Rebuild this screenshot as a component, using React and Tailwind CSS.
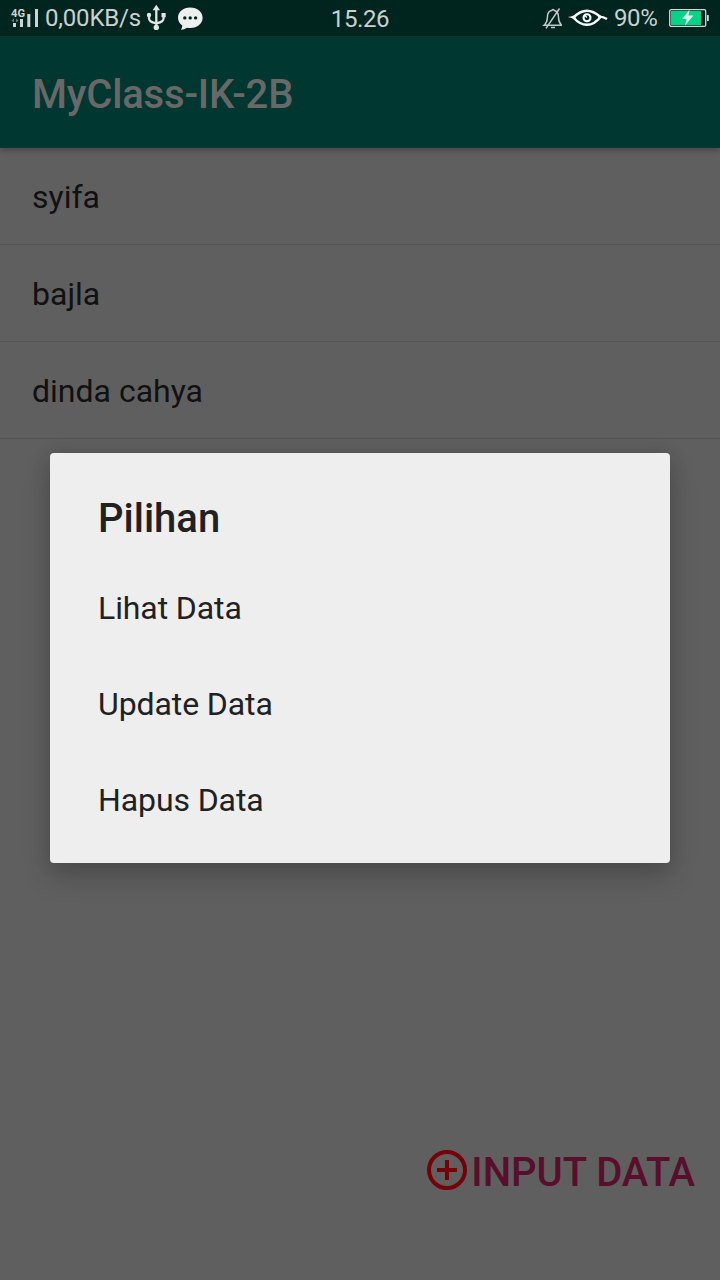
const items = ["syifa", "bajla", "dinda cahya"];
const options = ["Lihat Data", "Update Data", "Hapus Data"];

function SignalIcon() {
  return (
    <svg className="h-9 w-[30px] shrink-0" viewBox="0 0 30 36" fill="#cfd3d2">
      <text x="1" y="16.5" fontSize="10" fontWeight="700" fontFamily="Roboto, sans-serif" textLength="14" lengthAdjust="spacingAndGlyphs">4G</text>
      <rect x="3" y="23" width="3" height="4" />
      <rect x="10" y="19" width="3" height="8" />
      <rect x="17.300" y="14" width="3" height="13" />
      <rect x="25" y="9" width="3" height="18" />
      <path d="M1.500 20.500l2.500-2v4zM8.500 20.500l-2.500-2v4z" opacity=".5" />
    </svg>
  );
}

function UsbIcon() {
  return (
    <svg className="h-9 w-5 shrink-0" viewBox="0 0 20 36" fill="none" stroke="#e3e6e5" strokeWidth="2.3">
      <path d="M10.300 9v18M3 15v3c0 3 1.500 4 7.300 5.300C16.100 22 17.600 21 17.600 18V15" />
      <path d="M10.300 4.700L14 10.200H6.600z" fill="#e3e6e5" stroke="none" />
      <circle cx="3" cy="15" r="2.200" fill="#e3e6e5" stroke="none" />
      <rect x="15.500" y="13" width="4.200" height="4.200" fill="#e3e6e5" stroke="none" />
      <circle cx="10.300" cy="27.400" r="2.700" fill="#e3e6e5" stroke="none" />
    </svg>
  );
}

function ChatIcon() {
  return (
    <svg className="h-9 w-[26px] shrink-0" viewBox="-0.300 0.600 26 36">
      <path d="M13 8C5.800 8 .7 12.500.7 18.400c0 3.300 1.700 6 4.300 7.800-.1 1.700-.6 3-1.400 4.200 2.500-.2 4.500-.9 6.100-2.100 1.100.3 2.200.4 3.300.4 7.100 0 12.300-4.400 12.300-10.300S20.100 8 13 8z" fill="#eef0ef" />
      <circle cx="7.500" cy="18.500" r="1.700" fill="#00251f" />
      <circle cx="12.900" cy="18.500" r="1.700" fill="#00251f" />
      <circle cx="18.300" cy="18.500" r="1.700" fill="#00251f" />
    </svg>
  );
}

function MutedBellIcon() {
  return (
    <svg className="h-9 w-5 shrink-0" viewBox="-0.500 0 20 36" fill="none" stroke="#c3c8c7" strokeWidth="1.500">
      <path d="M1.500 25.300h17.500c-2.400-2.500-3-4.500-3-8 0-3.900-1.700-6.200-4.200-6.700-.4-1.600-2.200-1.600-2.600 0-2.900.4-4.300 2.800-4.300 6.700 0 3.500-.7 5.500-3.400 8zM8.500 27.500h4" />
      <path d="M17 8.500L3.500 28.300" />
    </svg>
  );
}

function EyeIcon() {
  return (
    <svg className="h-9 w-[42px] shrink-0" viewBox="0 0 42 36" fill="none" stroke="#fff" strokeWidth="2.400">
      <path d="M6.500 17.700c4.500-4.900 8.700-6.900 13.400-6.900 5.300 0 9 2.300 13.600 6.200-4 5.100-8 7.800-13.600 7.800-5.300 0-9.400-2.800-13.400-7.100z" />
      <path d="M.8 17c4.500-.5 7.500-2 10.500-4.300L8.500 17.700l2.500 4c-2.500-2.200-5.500-3.700-10.200-4.700z" fill="#fff" stroke="none" />
      <path d="M31 16.300c3.500.2 6.300.8 9 2.700" strokeWidth="2.300" />
      <circle cx="20" cy="17.800" r="3.500" strokeWidth="2.100" />
      <path d="M20 17.500l-2.500-2.200" strokeWidth="1.200" />
    </svg>
  );
}

function BatteryIcon() {
  return (
    <svg className="h-9 w-[42px] shrink-0" viewBox="-1 0 42 36">
      <rect x=".7" y="9.600" width="36" height="16.800" rx="1.500" fill="none" stroke="#d5d9d8" strokeWidth="1.300" />
      <rect x="2" y="11" width="30" height="14" fill="#00d489" />
      <rect x="38" y="15" width="1.800" height="6" fill="#d5d9d8" />
      <path d="M20.500 9.800L13 19h4.700L16 25.600l8.500-10.100h-5z" fill="#dbf6eb" />
    </svg>
  );
}

function StatusBar() {
  return (
    <div className="grid h-9 grid-cols-[1fr_auto_1fr] items-center bg-[#00251f] text-2xl leading-9 text-[#cbd0cf]">
      <div className="flex items-center pl-2.5">
        <SignalIcon />
        <span className="ml-[5px] w-[101px] whitespace-nowrap tracking-[-0.2px]">0,00KB/s</span>
        <UsbIcon />
        <span className="w-[11px]" />
        <ChatIcon />
      </div>
      <span className="translate-y-px tracking-[-0.4px]">15.26</span>
      <div className="flex items-center justify-end pr-2.5">
        <MutedBellIcon />
        <span className="w-[5px]" />
        <EyeIcon />
        <span className="ml-[5px] w-[54px] whitespace-nowrap tracking-[-0.4px]">90%</span>
        <BatteryIcon />
      </div>
    </div>
  );
}

function OptionsDialog() {
  return (
    <div role="dialog" className="absolute top-[453px] left-[50px] h-[410px] w-[620px] rounded-[4px] bg-[#eeeeee] pt-9 pl-12 text-[#212121] shadow-[0_14px_28px_rgba(0,0,0,0.18),0_0_18px_rgba(0,0,0,0.12)]">
      <h2 className="h-[71px] text-[40px] leading-[60px] font-medium">Pilihan</h2>
      <ul>
        {options.map((label) => (
          <li key={label} className="flex h-24 items-center text-[32px] tracking-[-0.1px]">{label}</li>
        ))}
      </ul>
    </div>
  );
}

export default function App() {
  return (
    <div className="relative flex h-[1280px] w-[720px] flex-col overflow-hidden bg-[#5f5f5f] font-['Roboto',sans-serif]">
      <StatusBar />
      <header className="z-0 flex h-28 shrink-0 items-center bg-[#003730] pt-1.5 pl-8 text-[40px] font-medium tracking-[-0.17px] text-[#686868] shadow-[0_2px_6px_rgba(0,0,0,0.3)]">
        MyClass-IK-2B
      </header>
      <ul className="text-[32px] text-[#111111]">
        {items.map((name) => (
          <li key={name} className="flex h-[97px] items-center border-b border-[#535353] pt-0.5 pl-8">{name}</li>
        ))}
      </ul>
      <button className="mt-auto mr-[25px] mb-[80px] flex h-[60px] items-center gap-1 self-end text-[40px] font-medium text-[#590e2c]">
        <svg className="h-10 w-10" viewBox="0 0 40 40" fill="none" stroke="#760009" strokeWidth="4">
          <circle cx="20" cy="20" r="18" />
          <path d="M20 10v20M10 20h20" />
        </svg>
        <span className="pt-1.5">INPUT DATA</span>
      </button>
      <OptionsDialog />
    </div>
  );
}
